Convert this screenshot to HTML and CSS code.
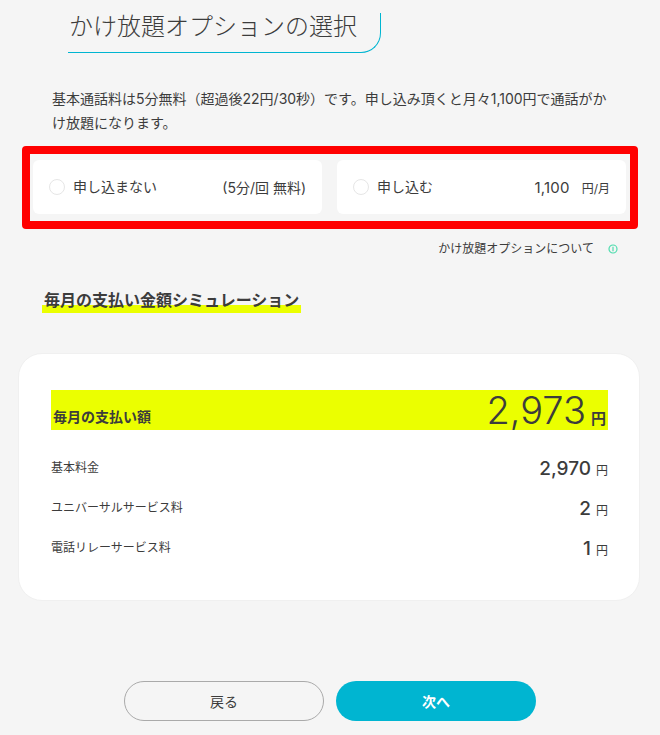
FILE: index.html
```html
<!DOCTYPE html>
<html lang="ja">

<head>
  <meta charset="UTF-8" />
  <title>かけ放題オプションの選択</title>
  <link rel="stylesheet" href="styles.css">
</head>

<body>
  <main>
    <h1 class="section-title">かけ放題オプションの選択</h1>
    <p class="lead">基本通話料は5分無料（超過後22円/30秒）です。申し込み頂くと月々1,100円で通話がかけ放題になります。</p>

    <div class="options">
      <label class="option">
        <span class="radio"></span>
        <span class="option-name">申し込まない</span>
        <span class="option-price">(5分/回 無料)</span>
      </label>
      <label class="option">
        <span class="radio"></span>
        <span class="option-name">申し込む</span>
        <span class="option-price option-price-small"><span class="option-num">1,100</span>円/月</span>
      </label>
    </div>

    <p class="about">
      かけ放題オプションについて
      <svg class="about-icon" viewBox="0 0 10 10" width="10" height="10" aria-hidden="true">
        <circle cx="5" cy="5" r="4" fill="none" stroke="#4fdcae" stroke-width="1.2" />
        <path d="M5 2.8V7.2" stroke="#4fdcae" stroke-width="1.2" />
      </svg>
    </p>

    <h2 class="sim-title"><span>毎月の支払い金額シミュレーション</span></h2>

    <section class="sim-card">
      <div class="total">
        <span class="total-label">毎月の支払い額</span>
        <span class="total-value">2,973<small>円</small></span>
      </div>
      <div class="row">
        <span class="row-label">基本料金</span>
        <span class="row-value">2,970<small>円</small></span>
      </div>
      <div class="row">
        <span class="row-label">ユニバーサルサービス料</span>
        <span class="row-value">2<small>円</small></span>
      </div>
      <div class="row">
        <span class="row-label">電話リレーサービス料</span>
        <span class="row-value">1<small>円</small></span>
      </div>
    </section>

    <div class="buttons">
      <a class="btn btn-back">戻る</a>
      <a class="btn btn-next">次へ</a>
    </div>
  </main>
</body>

</html>
```

FILE: styles.css
```css
:root {
  --bg: #f5f5f5;
  --text: #3c3c3c;
  --accent: #00b5d1;
  --marker: #ebff00;
}

* {
  margin: 0;
  padding: 0;
  box-sizing: border-box;
}

html,
body {
  height: 735px;
  overflow: hidden;
}

body {
  background: var(--bg);
  color: var(--text);
  font-family: "Inter", "Noto Sans CJK JP", sans-serif;
}

main {
  display: flex;
  flex-direction: column;
  padding-top: 13px;
}

.section-title {
  width: 313px;
  height: 40px;
  margin-left: 68px;
  padding-left: 1px;
  font-family: "Noto Sans CJK JP", sans-serif;
  font-size: 24px;
  font-weight: 300;
  line-height: 24px;
  border-right: 1px solid var(--accent);
  border-bottom: 1px solid var(--accent);
  border-bottom-right-radius: 20px;
}

.lead {
  margin: 34px 52px 0;
  font-size: 14px;
  line-height: 24px;
}

.options {
  display: flex;
  gap: 15px;
  width: 616px;
  height: 83px;
  margin: 11px 0 0 22px;
  padding: 6px 4px 7px 3px;
  border: 8px solid #f00;
  border-radius: 4px;
}

.option {
  flex: 1;
  display: flex;
  align-items: center;
  padding: 0 16px;
  background: #fff;
  border-radius: 6px;
  font-size: 14px;
}

.radio {
  width: 16px;
  height: 16px;
  margin-right: 8px;
  border: 1px solid #e6e6e6;
  border-radius: 50%;
}

.option-name {
  margin-top: -2px;
  flex: 1;
}

.option-price-small {
  font-size: 12px;
}

.option-num {
  margin-right: 12px;
  font-size: 15px;
  letter-spacing: 0.2px;
}

.about {
  display: flex;
  justify-content: flex-end;
  align-items: center;
  gap: 14px;
  margin: 12px 42px 0 0;
  font-size: 12px;
  line-height: 16px;
}

.sim-title {
  margin: 32px 0 0 42px;
  font-size: 16px;
  font-weight: 700;
  line-height: 22px;
}

.sim-title span {
  display: inline-block;
  padding: 0 2px;
  background: linear-gradient(transparent 16px, var(--marker) 16px);
  height: 24px;
}

.sim-card {
  width: 622px;
  height: 248px;
  margin: 40px 0 0 18px;
  padding: 36px 31px 0 32px;
  background: #fff;
  border: 1px solid #f0f0f0;
  border-radius: 24px;
}

.total {
  display: flex;
  justify-content: space-between;
  align-items: flex-end;
  height: 40px;
  padding: 0 2px;
  margin-bottom: 16px;
  background: var(--marker);
}

.total-label {
  font-size: 14px;
  font-weight: 700;
  line-height: 26px;
}

.total-value {
  font-size: 38px;
  font-weight: 300;
  line-height: 22px;
  white-space: nowrap;
}

.total-value small {
  margin-left: 5px;
  font-size: 15px;
  font-weight: 700;
}

.row {
  display: flex;
  justify-content: space-between;
  align-items: center;
  height: 40px;
}

.row-label {
  font-size: 12px;
}

.row-value {
  margin-top: 4px;
  font-size: 19px;
  font-weight: 500;
}

.row-value small {
  margin-left: 5px;
  font-size: 12px;
  font-weight: 400;
}

.buttons {
  display: flex;
  justify-content: center;
  gap: 12px;
  margin-top: 80px;
}

.btn {
  display: flex;
  align-items: center;
  justify-content: center;
  width: 200px;
  height: 40px;
  border-radius: 20px;
  font-size: 14px;
}

.btn-back {
  border: 1px solid #aaa;
}

.btn-next {
  background: var(--accent);
  color: #fff;
  font-weight: 700;
}
```
